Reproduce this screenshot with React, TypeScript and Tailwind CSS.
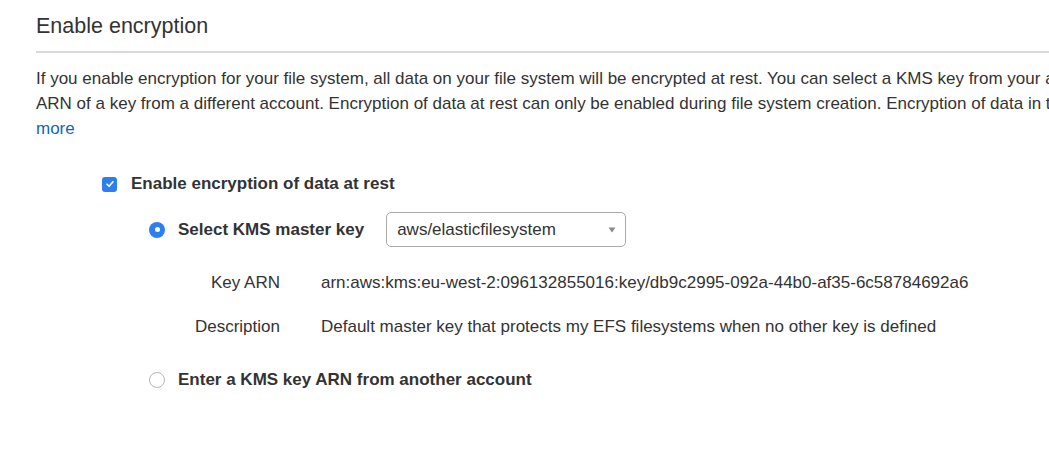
import React from "react";

export default function App() {
  return (
    <div
      className="w-[1049px] h-[453px] overflow-hidden bg-white text-[#333333]"
      style={{ fontFamily: '"Liberation Sans", Arial, sans-serif' }}
    >
      <div className="pl-9">
        <h2 className="pt-[12px] text-[21.5px] leading-[28px] text-[#333333] font-normal">
          Enable encryption
        </h2>
        <div className="mt-[11px] h-[2px] bg-[#d9d9d9]" />
        <div className="mt-[13px] text-[17px] leading-[25px] whitespace-nowrap">
          <div>
            If you enable encryption for your file system, all data on your file system will be encrypted at rest. You can select a KMS key from your account, or enter the
          </div>
          <div>
            ARN of a key from a different account. Encryption of data at rest can only be enabled during file system creation. Encryption of data in transit is configured when
          </div>
          <div>
            <a className="text-[#1166bb]">more</a>
          </div>
        </div>
      </div>

      <div className="mt-[33px] pl-[102px] flex items-center gap-[14px]">
        <div className="w-[15px] h-[15px] rounded-[3px] bg-[#2d7ff0] flex items-center justify-center">
          <svg width="10" height="10" viewBox="0 0 10 10">
            <path d="M2 5.2 L4.1 7.3 L8 2.8" fill="none" stroke="white" strokeWidth="1.6" strokeLinecap="round" strokeLinejoin="round" />
          </svg>
        </div>
        <span className="text-[17px] font-bold leading-[20px]">Enable encryption of data at rest</span>
      </div>

      <div className="mt-[18px] pl-[149px] flex items-center">
        <div className="w-[16px] h-[16px] rounded-full bg-[#2d7ff0] flex items-center justify-center">
          <div className="w-[5px] h-[5px] rounded-full bg-white" />
        </div>
        <span className="ml-[13px] text-[17px] font-bold leading-[20px]">Select KMS master key</span>
        <div className="ml-[22px] w-[240px] h-[35px] rounded-[5px] border border-[#aaaaaa] flex items-center justify-between pl-[10px] pr-[9px]">
          <span className="text-[17px]">aws/elasticfilesystem</span>
          <svg width="8" height="6" viewBox="0 0 8 6">
            <path d="M0.5 0.5 L7.5 0.5 L4 5.5 Z" fill="#8a8a8a" />
          </svg>
        </div>
      </div>

      <div className="mt-[26px] grid grid-cols-[280px_1fr] gap-y-[24px] text-[17px] leading-[20px]">
        <div className="text-right">Key ARN</div>
        <div className="pl-[41px]">arn:aws:kms:eu-west-2:096132855016:key/db9c2995-092a-44b0-af35-6c58784692a6</div>
        <div className="text-right">Description</div>
        <div className="pl-[41px]">Default master key that protects my EFS filesystems when no other key is defined</div>
      </div>

      <div className="mt-[33px] pl-[149px] flex items-center">
        <div className="w-[16px] h-[16px] rounded-full border border-[#b5b5b5] bg-white" />
        <span className="ml-[13px] text-[17px] font-bold leading-[20px]">Enter a KMS key ARN from another account</span>
      </div>
    </div>
  );
}
